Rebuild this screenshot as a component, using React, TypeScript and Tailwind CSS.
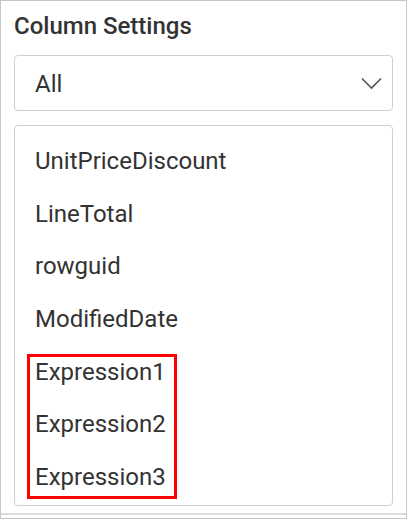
const columns = ["UnitPriceDiscount", "LineTotal", "rowguid", "ModifiedDate"];
const expressions = ["Expression1", "Expression2", "Expression3"];

function ChevronDown() {
  return (
    <svg width="21" height="13" viewBox="0 0 21 13" fill="none">
      <path d="M1 1.5 L10.5 11 L20 1.5" stroke="#555" strokeWidth="1.6" />
    </svg>
  );
}

export default function App() {
  return (
    <div
      className="w-[407px] h-[519px] bg-white border border-[#c6c6c6] flex flex-col overflow-hidden text-[#333]"
      style={{ fontFamily: "Roboto, 'Liberation Sans', sans-serif" }}
    >
      <div className="px-[13px] pt-[11px] flex flex-col shrink-0">
        {/* Title */}
        <div className="text-[24px] leading-[28px] font-medium text-[#333]">Column Settings</div>

        {/* Select */}
        <div className="mt-[15px] h-[56px] shrink-0 border border-[#cfcfcf] rounded-[4px] flex items-center justify-between pl-[20px] pr-[10px]">
          <span className="text-[24px] leading-[28px] pt-[1px]">All</span>
          <ChevronDown />
        </div>

        {/* Column list */}
        <div className="mt-[14px] h-[381px] shrink-0 border border-[#cfcfcf] rounded-[4px] pl-[20px] pt-[9px] overflow-hidden">
          {columns.map((c) => (
            <div key={c} className="h-[52.6px] flex items-center text-[24px] leading-[28px]">
              {c}
            </div>
          ))}
          <div className="relative">
            {expressions.map((c) => (
              <div key={c} className="h-[52.6px] flex items-center text-[24px] leading-[28px]">
                {c}
              </div>
            ))}
            <div className="absolute left-[-8px] top-[8.5px] w-[150px] h-[145px] border-[3px] border-[#ff0000]" />
          </div>
        </div>
      </div>
      <div className="h-[5px] shrink-0 border-t-2 border-[#dcdcdc] mt-[7px]" />
    </div>
  );
}
